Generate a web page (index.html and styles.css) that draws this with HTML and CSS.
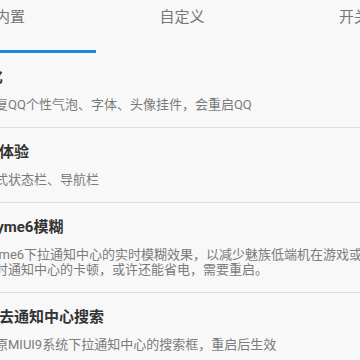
FILE: index.html
```html
<!DOCTYPE html>
<html lang="zh-CN">
<head>
  <meta charset="UTF-8" />
  <meta name="viewport" content="width=device-width, initial-scale=1.0"/>
  <title>设置</title>
  <link rel="stylesheet" href="styles.css">
</head>
<body>

  <div class="page">
    <div class="tabs">
      <div class="tab active">内置</div>
      <div class="tab">自定义</div>
      <div class="tab">开关</div>
    </div>

    <ul class="list">
      <li class="item">
        <div class="title">&nbsp;美化</div>
        <div class="desc">可恢复QQ个性气泡、字体、头像挂件，会重启QQ</div>
      </li>
      <li class="item">
        <div class="title">沉浸体验</div>
        <div class="desc">沉浸式状态栏、导航栏</div>
      </li>
      <li class="item">
        <div class="title">去Flyme6模糊</div>
        <div class="desc">去Flyme6下拉通知中心的实时模糊效果，以减少魅族低端机在游戏或直播时<br>下拉时通知中心的卡顿，或许还能省电，需要重启。</div>
      </li>
      <li class="item">
        <div class="title">隐藏去通知中心搜索</div>
        <div class="desc">隐藏原MIUI9系统下拉通知中心的搜索框，重启后生效</div>
      </li>
    </ul>
  </div>

</body>
</html>
```

FILE: styles.css
```css
* { box-sizing: border-box; margin: 0; padding: 0; }
html, body {
  height: 100%;
  background: #f8f8f8;
  font-family: Roboto, "Noto Sans CJK SC", sans-serif;
  overflow: hidden;
}
.page {
  width: 516px;
  margin-left: -76px;
}
.tabs {
  display: grid;
  grid-template-columns: repeat(3, 1fr);
  height: 53px;
}
.tab {
  text-align: center;
  font-size: 15px;
  line-height: 18px;
  padding-top: 8px;
  color: #777;
}
.tab.active {
  border-bottom: 3px solid #1a8ad6;
}
.list { list-style: none; }
.item {
  padding: 14px 16px 15px 45px;
  border-bottom: 1px solid #dedede;
  display: flex;
  flex-direction: column;
  gap: 10px;
}
.title {
  font-size: 15px;
  line-height: 20px;
  font-weight: bold;
  color: #333;
  white-space: nowrap;
}
.desc {
  font-size: 13px;
  line-height: 15px;
  color: #7b7b7b;
  white-space: nowrap;
}
```
